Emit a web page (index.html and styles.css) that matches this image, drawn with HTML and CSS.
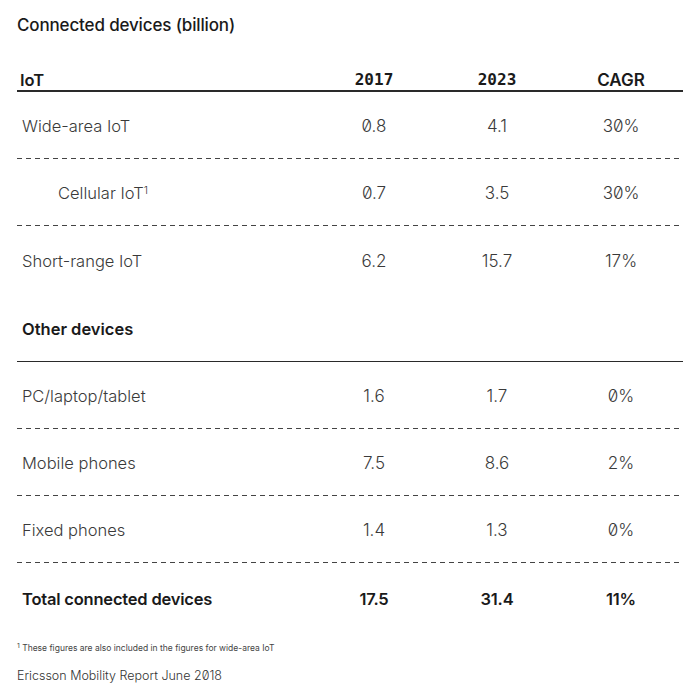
FILE: index.html
```html
<!DOCTYPE html>
<html lang="en">
<head>
<meta charset="utf-8">
<title>Connected devices (billion)</title>
<link rel="stylesheet" href="styles.css">
</head>
<body>
<div class="page">
  <h1 class="title">Connected devices (billion)</h1>
  <div class="row head">
    <div class="label">IoT</div>
    <div class="num mono">2017</div>
    <div class="num mono">2023</div>
    <div class="num">CAGR</div>
  </div>
  <div class="row dashed">
    <div class="label">Wide-area IoT</div>
    <div class="num">0.8</div>
    <div class="num">4.1</div>
    <div class="num">30%</div>
  </div>
  <div class="row dashed">
    <div class="label indent">Cellular IoT<sup>1</sup></div>
    <div class="num">0.7</div>
    <div class="num">3.5</div>
    <div class="num">30%</div>
  </div>
  <div class="row tall">
    <div class="label">Short-range IoT</div>
    <div class="num">6.2</div>
    <div class="num">15.7</div>
    <div class="num">17%</div>
  </div>
  <div class="row section">
    <div class="label">Other devices</div>
  </div>
  <div class="row dashed">
    <div class="label">PC/laptop/tablet</div>
    <div class="num">1.6</div>
    <div class="num">1.7</div>
    <div class="num">0%</div>
  </div>
  <div class="row dashed">
    <div class="label">Mobile phones</div>
    <div class="num">7.5</div>
    <div class="num">8.6</div>
    <div class="num">2%</div>
  </div>
  <div class="row dashed">
    <div class="label">Fixed phones</div>
    <div class="num">1.4</div>
    <div class="num">1.3</div>
    <div class="num">0%</div>
  </div>
  <div class="row total">
    <div class="label">Total connected devices</div>
    <div class="num">17.5</div>
    <div class="num">31.4</div>
    <div class="num">11%</div>
  </div>
  <p class="footnote"><sup>1</sup> These figures are also included in the figures for wide-area IoT</p>
  <p class="source">Ericsson Mobility Report June 2018</p>
</div>
</body>
</html>
```
FILE: styles.css
```css
html, body {
  margin: 0;
  padding: 0;
  background: #ffffff;
}

body {
  font-family: "Inter", "Lato", "Noto Sans", sans-serif;
  font-variant-numeric: slashed-zero;
  color: #3a3a3a;
}

.page {
  width: 666px;
  padding: 0 17px;
}

.title {
  margin: 0;
  padding-top: 13px;
  font-size: 17px;
  line-height: 24px;
  font-weight: 500;
  color: #1a1a1a;
  letter-spacing: -0.15px;
}

.row {
  display: grid;
  grid-template-columns: 296px 122px 124px 124px;
  align-items: center;
  height: 66px;
  font-size: 16.5px;
  font-weight: 300;
}

.label {
  padding-left: 5px;
}

.label.indent {
  padding-left: 41px;
}

.num {
  text-align: center;
  font-size: 17px;
}

sup {
  font-size: 0.65em;
  line-height: 0;
  vertical-align: 0.45em;
}

.row.head {
  height: 53px;
  align-items: end;
  line-height: 20px;
  border-bottom: 2px solid #2a2a2a;
  font-weight: 600;
  color: #1a1a1a;
}

.row.head .label {
  padding-left: 3px;
}

.mono {
  font-family: "DejaVu Sans Mono", monospace;
  font-size: 16px;
  font-weight: 700;
}

.row.dashed {
  height: 67px;
  background-image: repeating-linear-gradient(to right, #444 0 5px, transparent 5px 9px);
  background-size: 100% 1px;
  background-position: left bottom;
  background-repeat: no-repeat;
}

.row.tall {
  height: 70px;
}

.row.section {
  height: 65px;
  border-bottom: 1.5px solid #2a2a2a;
  font-weight: 600;
  color: #1a1a1a;
}

.row.total {
  padding-top: 3px;
  height: 66px;
  font-weight: 600;
  color: #1a1a1a;
  letter-spacing: -0.2px;
}

.row.total .num {
  font-size: 16.5px;
}

.footnote {
  margin: 9px 0 0;
  font-size: 8.5px;
  line-height: 14px;
  color: #444;
}

.footnote sup {
  font-size: 0.8em;
}

.source {
  margin: 11px 0 0;
  font-size: 12.5px;
  line-height: 20px;
  font-weight: 300;
  color: #333;
}
```
